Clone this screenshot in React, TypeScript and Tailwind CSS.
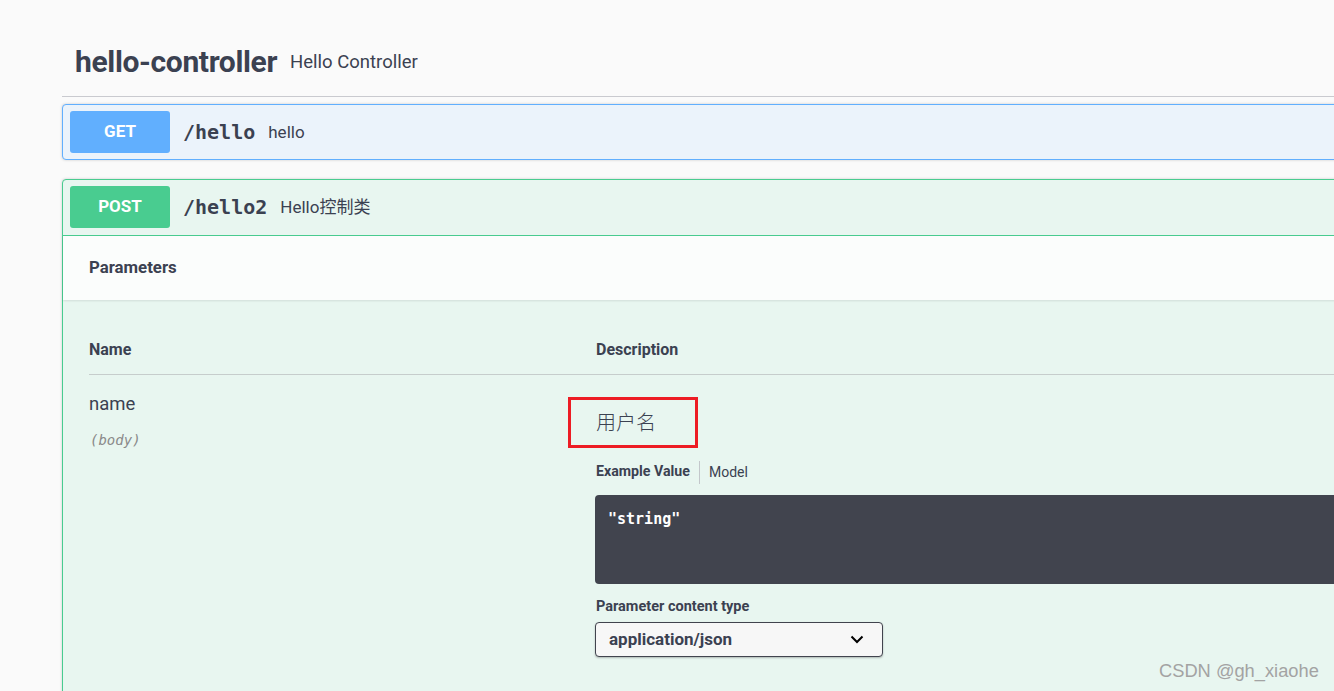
import React from "react";

const sans = "font-['Roboto','Noto_Sans_CJK_SC',sans-serif]";
const mono = "font-['DejaVu_Sans_Mono',monospace]";

export default function App() {
  return (
    <div className={`relative w-[1334px] h-[691px] overflow-hidden bg-[#fafafa] text-[#3b4151] ${sans}`}>
      <div className="pl-[62px] w-[1400px]">
        {/* Tag header */}
        <div className="h-[97px] border-b border-[#c9cacf] flex items-center pt-[28px] pl-[13px]">
          <span className="text-[30px] font-bold leading-[36px] tracking-[-0.35px]">hello-controller</span>
          <span className="ml-[13px] text-[18.5px] leading-[24px]">Hello Controller</span>
        </div>

        {/* GET block */}
        <div className="mt-[7px] border border-[#61affe] rounded-[4px] bg-[#ebf3fb] shadow-[0_0_3px_rgba(0,0,0,0.19)]">
          <div className="flex items-center px-[7px] py-[6px]">
            <div className="w-[100px] h-[42px] rounded-[3px] bg-[#61affe] flex items-center justify-center text-white font-bold text-[17px]">
              GET
            </div>
            <span className={`ml-[13px] ${mono} font-bold text-[20px] leading-[24px]`}>/hello</span>
            <span className="ml-[13px] text-[17px] leading-[24px]">hello</span>
          </div>
        </div>

        {/* POST block */}
        <div className="mt-[19px] border border-[#49cc90] rounded-[4px] bg-[#e8f6f0] shadow-[0_0_3px_rgba(0,0,0,0.19)] h-[560px]">
          <div className="flex items-center px-[7px] pt-[6px] pb-[7px] border-b border-[#49cc90]">
            <div className="w-[100px] h-[42px] rounded-[3px] bg-[#49cc90] flex items-center justify-center text-white font-bold text-[17px]">
              POST
            </div>
            <span className={`ml-[13px] ${mono} font-bold text-[20px] leading-[24px]`}>/hello2</span>
            <span className="ml-[13px] text-[17px] leading-[24px] font-['Roboto','Noto_Sans_CJK_SC',sans-serif]">Hello控制类</span>
          </div>

          {/* Section header */}
          <div className="h-[64px] bg-[#fbfdfc] shadow-[0_1px_2px_rgba(0,0,0,0.1)] flex items-center pl-[26px]">
            <span className="text-[16.8px] font-bold">Parameters</span>
          </div>

          {/* Table */}
          <div className="pl-[26px]">
            <div className="flex pt-[40px] pb-[14px] border-b border-[#c6cdcc]">
              <div className="w-[507px] text-[16px] font-bold leading-[20px]">Name</div>
              <div className="text-[16px] font-bold leading-[20px]">Description</div>
            </div>
            <div className="flex">
              <div className="w-[507px]">
                <div className="mt-[17px] text-[18.5px] leading-[24px]">name</div>
                <div className={`mt-[14px] ml-[1px] ${mono} italic text-[14px] leading-[20px] text-[#8a8a8a]`}>(body)</div>
              </div>
              <div className="flex-1">
                <div className="relative mt-[33px] h-[28px]">
                  <span className="text-[20px] leading-[28px] font-['Noto_Sans_CJK_SC',sans-serif] font-light">用户名</span>
                  <div className="absolute left-[-28px] top-[-11px] w-[130px] h-[51px] border-[3px] border-[#ed1c24]" />
                </div>
                <div className="mt-[26px] flex items-center h-[20px]">
                  <span className="text-[14.2px] font-bold">Example Value</span>
                  <span className="mx-[9px] w-px h-[23px] bg-[#c3c7cb]" />
                  <span className="text-[14px]">Model</span>
                </div>
                <div className="mt-[13px] ml-[-1px] h-[89px] rounded-[4px] bg-[#41444e] pt-[12px] pl-[13px]">
                  <span className={`${mono} font-bold text-[15px] text-white leading-[20px]`}>"string"</span>
                </div>
                <div className="mt-[14px] text-[14.5px] font-bold leading-[18px]">Parameter content type</div>
                <div className="mt-[6px] ml-[-1px] w-[288px] h-[35px] rounded-[4px] border border-[#41444e] bg-[#f7f7f7] shadow-[0_1px_2px_rgba(0,0,0,0.25)] flex items-center pl-[13px] pr-[18px] justify-between">
                  <span className="text-[17px] font-bold">application/json</span>
                  <svg width="14" height="9" viewBox="0 0 14 9">
                    <polyline points="1.5,1.5 7,7 12.5,1.5" fill="none" stroke="#000" strokeWidth="2" />
                  </svg>
                </div>
              </div>
            </div>
          </div>
        </div>
      </div>

      <div className="absolute left-[1159px] top-[659px] text-[18.3px] leading-[24px] text-[#a3a3a3] font-['Liberation_Sans',sans-serif]">
        CSDN @gh_xiaohe
      </div>
    </div>
  );
}
